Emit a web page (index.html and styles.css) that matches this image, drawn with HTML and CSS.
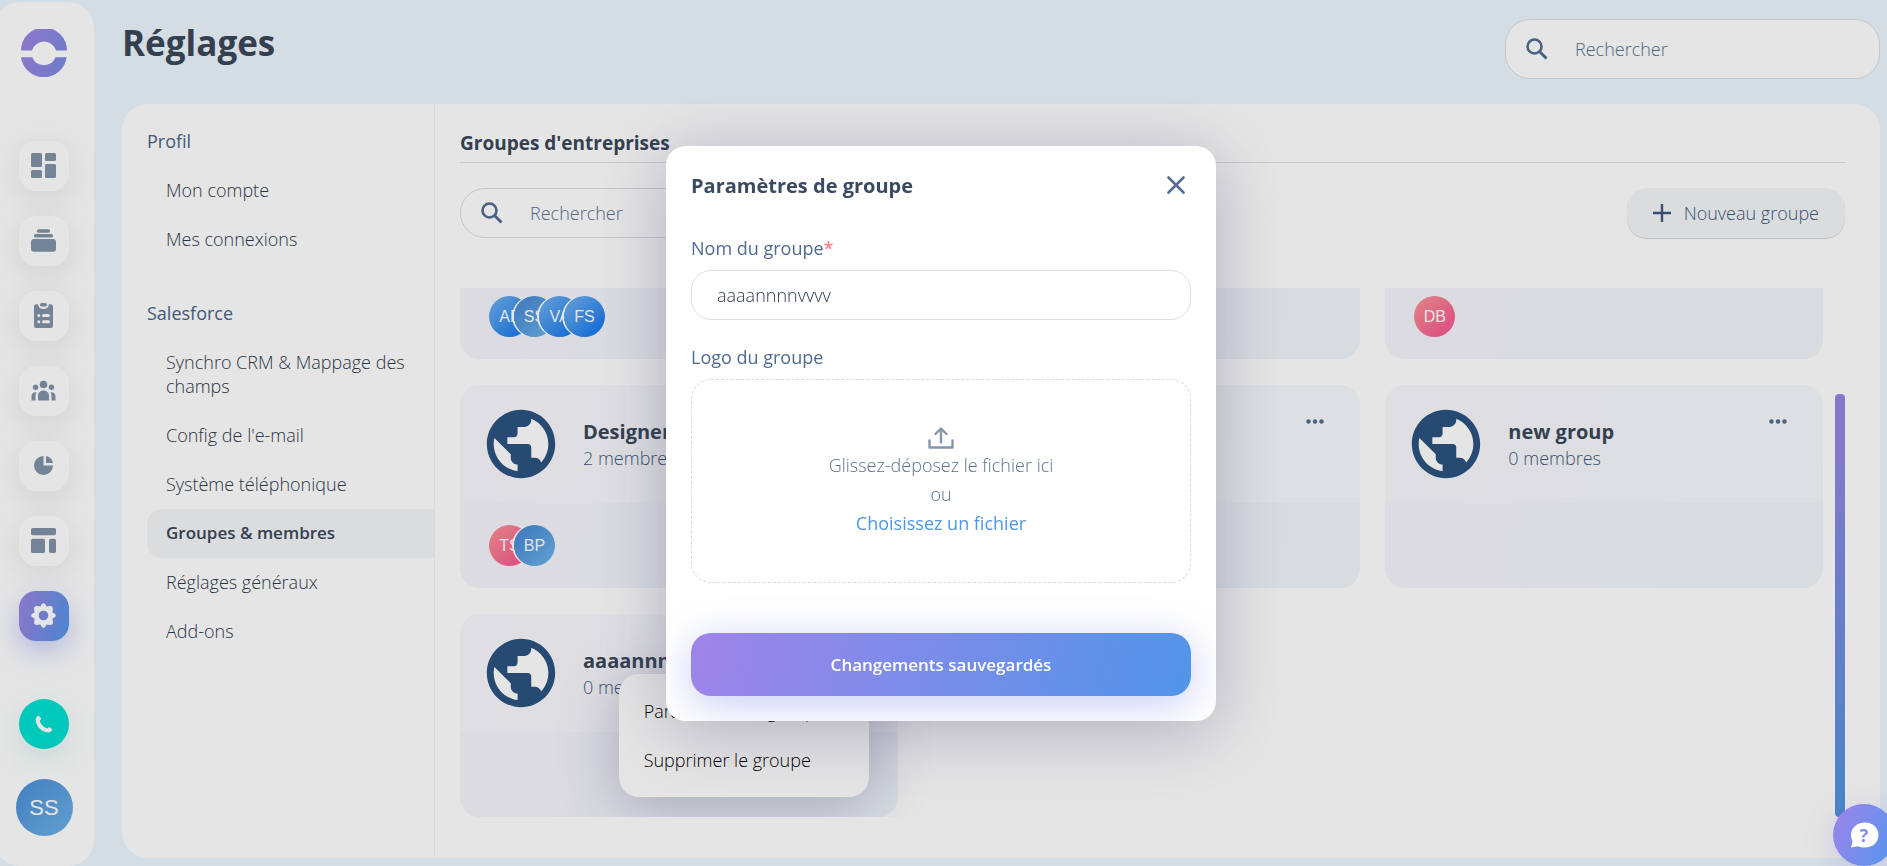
FILE: index.html
```html
<!DOCTYPE html>
<html lang="fr">
<head>
<meta charset="utf-8">
<title>Réglages</title>
<link rel="stylesheet" href="styles.css">
</head>
<body>
<svg class="defs" aria-hidden="true">
  <defs>
    <linearGradient id="brand" x1="0" y1="0" x2="1" y2="0.3">
      <stop offset="0" stop-color="#9f84e0"/>
      <stop offset="1" stop-color="#808ae0"/>
    </linearGradient>
    <symbol id="i-search" viewBox="0 0 22 22"><circle cx="8.500" cy="8.500" r="7" fill="none" stroke="currentColor" stroke-width="2.600"/><path d="M13.500 13.500 20.500 20.500" stroke="currentColor" stroke-width="3" fill="none"/></symbol>
    <symbol id="i-globe" viewBox="0 0 24 24"><circle cx="12" cy="12" r="9" fill="#fff"/><path fill="currentColor" d="M12 2C6.480 2 2 6.480 2 12s4.480 10 10 10 10-4.480 10-10S17.520 2 12 2zm-1 17.930c-3.950-.490-7-3.850-7-7.930 0-.620.080-1.210.210-1.790L9 15v1c0 1.100.900 2 2 2v1.930zm6.900-2.540c-.260-.810-1-1.390-1.900-1.390h-1v-3c0-.550-.450-1-1-1H8v-2h2c.550 0 1-.450 1-1V7h2c1.100 0 2-.900 2-2v-.410c2.930 1.190 5 4.060 5 7.410 0 2.080-.800 3.970-2.100 5.390z"/></symbol>
    <symbol id="i-dots" viewBox="0 0 18 5"><circle cx="2.500" cy="2.500" r="2.200"/><circle cx="9" cy="2.500" r="2.200"/><circle cx="15.500" cy="2.500" r="2.200"/></symbol>
  </defs>
</svg>

<div class="app">
  <nav class="sidebar" aria-label="Navigation principale">
    <svg class="logo" viewBox="0 0 46 48"><path fill="url(#brand)" d="M0 21.500A23 23 0 0 1 46 21.500H35A12.500 12.500 0 0 0 11 21.500ZM0 28.300A23 23 0 0 0 45.600 28.300H34.500A12.500 12.500 0 0 1 11.300 28.300Z"/></svg>
    <div class="rail">
      <a class="rail-item" href="#" aria-label="Tableau de bord"><svg viewBox="0 0 25 25" fill="currentColor"><rect width="11" height="14" rx="1.500"/><rect x="14" width="11" height="8" rx="1.500"/><rect y="17" width="11" height="8" rx="1.500"/><rect x="14" y="11" width="11" height="14" rx="1.500"/></svg></a>
      <a class="rail-item" href="#" aria-label="Collections"><svg viewBox="0 0 25 25" fill="currentColor"><rect x="6" y="1.200" width="13" height="3.600" rx="1.500"/><rect x="3" y="6" width="19" height="3.600" rx="1.500"/><rect y="11" width="25" height="12.800" rx="3"/></svg></a>
      <a class="rail-item" href="#" aria-label="Tâches"><svg viewBox="0 0 25 25"><path fill="currentColor" d="M5.500 1.300H7C7.500 4.500 9 6 12.500 6S17.500 4.500 18 1.300H19.500A2.500 2.500 0 0 1 22 3.800V22.500A2.500 2.500 0 0 1 19.500 25H5.500A2.500 2.500 0 0 1 3 22.500V3.800A2.500 2.500 0 0 1 5.500 1.300Z"/><rect x="9" y="0" width="7" height="3.600" rx="1.700" fill="currentColor"/><g fill="#fff"><circle cx="7.800" cy="12.500" r="1.500"/><circle cx="7.800" cy="18.800" r="1.500"/><rect x="11" y="11" width="8" height="3" rx="1.500"/><rect x="11" y="17.300" width="8" height="3" rx="1.500"/></g></svg></a>
      <a class="rail-item" href="#" aria-label="Contacts"><svg viewBox="0 0 25 25" fill="currentColor"><circle cx="12.500" cy="6.500" r="3.800"/><circle cx="4.600" cy="9.300" r="2.700"/><circle cx="20.400" cy="9.300" r="2.700"/><path d="M7 22.500V17.500A5.500 5 0 0 1 18 17.500V22.500Z"/><path d="M.5 22.500V18.500C.5 15.500 2.500 14 5.500 14.300C4.700 16 4.500 17.500 4.500 19.500V22.500ZM24.500 22.500V18.500C24.500 15.500 22.500 14 19.500 14.300C20.300 16 20.500 17.500 20.500 19.500V22.500Z"/></svg></a>
      <a class="rail-item" href="#" aria-label="Rapports"><svg viewBox="0 0 25 25" fill="currentColor"><path d="M12.500 3A9.500 9.500 0 1 0 22 12.500H12.500Z"/><path d="M15 3A9 8.500 0 0 1 22 10H15Z"/></svg></a>
      <a class="rail-item" href="#" aria-label="Modèles"><svg viewBox="0 0 25 25" fill="currentColor"><rect width="25" height="7.200" rx="1.800"/><rect y="10.800" width="14" height="14.200" rx="1.800"/><rect x="18" y="10.800" width="7" height="14.200" rx="1.800"/></svg></a>
      <a class="rail-item is-active" href="#" aria-label="Réglages"><svg viewBox="0 0 25 25"><path fill="#fff" fill-rule="evenodd" d="M10.500 1.500Q12.500-1.200 14.500 1.500L15.600 3.600L18.900 3Q22 2.800 21.900 6.100L21.400 9.400L23.500 10.500Q26.200 12.500 23.500 14.500L21.400 15.600L22 18.900Q22.200 22 18.900 21.900L15.600 21.400L14.500 23.500Q12.500 26.200 10.500 23.500L9.400 21.400L6.100 22Q3 22.200 3.100 18.900L3.600 15.600L1.500 14.500Q-1.200 12.500 1.500 10.500L3.600 9.400L3 6.100Q2.800 3 6.100 3.100L9.400 3.600ZM12.500 7.700A4.800 4.800 0 1 0 12.500 17.300A4.800 4.800 0 1 0 12.500 7.700Z"/></svg></a>
    </div>
    <a class="call" href="#" aria-label="Appeler"><svg viewBox="0 0 18 18"><path fill="#fff" d="M3.500.6C1.600 1.300.6 3 .7 5C1.100 11.500 6.500 17 13 17.300C15 17.400 16.800 16.500 17.500 14.500L14.300 12L12.200 13.500C8.500 12.200 6 9.700 4.700 6L6.300 3.800Z"/></svg></a>
    <a class="me" href="#">SS</a>
  </nav>

  <main class="main">
    <header class="topbar">
      <h1>Réglages</h1>
      <label class="search search-top"><svg><use href="#i-search"/></svg><input type="search" placeholder="Rechercher" aria-label="Rechercher"></label>
    </header>

    <div class="panel">
      <nav class="menu" aria-label="Réglages">
        <section>
          <h2>Profil</h2>
          <a href="#">Mon compte</a>
          <a href="#">Mes connexions</a>
        </section>
        <section>
          <h2>Salesforce</h2>
          <a href="#">Synchro CRM &amp; Mappage des champs</a>
          <a href="#">Config de l'e-mail</a>
          <a href="#">Système téléphonique</a>
          <a href="#" class="is-current">Groupes &amp; membres</a>
          <a href="#">Réglages généraux</a>
          <a href="#">Add-ons</a>
        </section>
      </nav>

      <section class="content">
        <h2 class="content-title">Groupes d'entreprises</h2>
        <div class="tools">
          <label class="search search-groups"><svg><use href="#i-search"/></svg><input type="search" placeholder="Rechercher" aria-label="Rechercher un groupe"></label>
          <button class="new-group" type="button"><svg viewBox="0 0 18 18"><path d="M9 0V18M0 9H18" stroke="currentColor" stroke-width="2.400"/></svg>Nouveau groupe</button>
        </div>
        <div class="groups">
          <div class="grid">
            <article class="card">
              <div class="card-head"></div>
              <div class="card-foot"><span class="avatar sky">AF</span><span class="avatar blue">SS</span><span class="avatar sky">VA</span><span class="avatar sky">FS</span></div>
            </article>
            <article class="card">
              <div class="card-head"></div>
              <div class="card-foot"></div>
            </article>
            <article class="card">
              <div class="card-head"></div>
              <div class="card-foot"><span class="avatar pink">DB</span></div>
            </article>
            <article class="card">
              <div class="card-head"><svg class="globe"><use href="#i-globe"/></svg><div class="info"><h3>Designers</h3><p>2 membres</p></div></div>
              <div class="card-foot"><span class="avatar pink">TS</span><span class="avatar blue">BP</span></div>
            </article>
            <article class="card">
              <div class="card-head"><button class="more" type="button" aria-label="Options"><svg><use href="#i-dots"/></svg></button></div>
              <div class="card-foot"></div>
            </article>
            <article class="card">
              <div class="card-head"><svg class="globe"><use href="#i-globe"/></svg><div class="info"><h3>new group</h3><p>0 membres</p></div><button class="more" type="button" aria-label="Options"><svg><use href="#i-dots"/></svg></button></div>
              <div class="card-foot"></div>
            </article>
            <article class="card">
              <div class="card-head"><svg class="globe"><use href="#i-globe"/></svg><div class="info"><h3>aaaannnnvvvv</h3><p>0 membres</p></div></div>
              <div class="card-foot"></div>
              <div class="dropdown"><a href="#">Paramètres de groupe</a><a href="#">Supprimer le groupe</a></div>
            </article>
          </div>
          <div class="scroll-thumb"></div>
        </div>
      </section>
    </div>
  </main>
</div>

<div class="overlay">
  <form class="modal" role="dialog" aria-labelledby="modal-title">
    <header class="modal-head">
      <h2 id="modal-title">Paramètres de groupe</h2>
      <button class="close" type="button" aria-label="Fermer"><svg viewBox="0 0 18 18"><path d="M1.500 1.500 16.500 16.500M16.500 1.500 1.500 16.500" stroke="currentColor" stroke-width="2.600" stroke-linecap="round"/></svg></button>
    </header>
    <div class="field">
      <label for="group-name">Nom du groupe<span class="required">*</span></label>
      <input id="group-name" type="text" value="aaaannnnvvvv">
    </div>
    <div class="field">
      <span class="field-label">Logo du groupe</span>
      <div class="dropzone">
        <svg viewBox="0 0 26 22" fill="none" stroke="currentColor" stroke-width="2.400" stroke-linejoin="round" stroke-linecap="round"><path d="M1.500 13.500V20.500H24.500V13.500"/><path d="M13 15.500V2M7.500 7 13 1.500 18.500 7"/></svg>
        <span>Glissez-déposez le fichier ici</span>
        <span>ou</span>
        <a href="#">Choisissez un fichier</a>
      </div>
    </div>
    <button class="save" type="submit">Changements sauvegardés</button>
  </form>
</div>

<button class="help" type="button" aria-label="Aide"><svg viewBox="0 0 29 26"><path fill="#fff" d="M15 0.500C7 .5 1 6 1 13C1 15.500 1.600 17.500 2.500 19.200L1 25.500L8 24.300C10 25.200 12.500 25.500 15 25.500C23 25.500 28.500 20 28.500 13S23 .5 15 .5Z"/></svg><span>?</span></button>
</body>
</html>
```
FILE: styles.css
```css
* { box-sizing: border-box; }

body {
  margin: 0;
  height: 100vh;
  overflow: hidden;
  background: #eef6fe;
  color: #2f3b4d;
  font-family: "Open Sans", "Noto Sans", sans-serif;
  font-size: 18px;
  font-weight: 300;
  line-height: 25px;
}

h1, h2, h3, p { margin: 0; }
a { color: inherit; text-decoration: none; }
button, input { font: inherit; color: inherit; }
button { border: 0; padding: 0; background: none; cursor: pointer; }
.defs { position: absolute; width: 0; height: 0; }

.app { display: flex; height: 100vh; }

/* Sidebar */
.sidebar {
  flex: none;
  width: 100px;
  margin: 2px 28px 0 -6px;
  padding: 27px 0 30px;
  display: flex;
  flex-direction: column;
  align-items: center;
  background: #fff;
  border-radius: 26px;
}
.logo { width: 46px; height: 48px; margin-bottom: 64px; }
.rail { display: grid; gap: 25px; }
.rail-item {
  width: 50px;
  height: 50px;
  display: grid;
  place-items: center;
  padding: 0 1px 1px 0;
  border-radius: 17px;
  background: #fff;
  color: #8093a8;
  box-shadow: 0 8px 30px rgba(40, 40, 60, 0.1);
}
.rail-item svg { width: 25px; height: 25px; }
.rail-item.is-active {
  background: linear-gradient(105deg, #9f84e0, #5295e8);
  box-shadow: 0 10px 28px rgba(90, 110, 225, 0.35);
}
.call {
  width: 50px;
  height: 50px;
  margin-top: auto;
  display: grid;
  place-items: center;
  border-radius: 50%;
  background: #00dfd0;
  box-shadow: 0 10px 30px rgba(0, 180, 150, 0.14);
}
.call svg { width: 18px; height: 18px; }
.me {
  width: 57px;
  height: 57px;
  margin-top: 30px;
  border-radius: 50%;
  background: linear-gradient(135deg, #4a8bd8, #6fb4e6);
  color: #fff;
  font: 22px/57px "Liberation Sans", Arial, sans-serif;
  text-align: center;
}

/* Page header */
.main {
  flex: 1;
  min-width: 0;
  display: flex;
  flex-direction: column;
  padding: 19px 7px 8px 0;
}
.topbar {
  display: flex;
  justify-content: space-between;
  margin-bottom: 25px;
}
h1 { font-size: 35px; line-height: 48px; font-weight: 700; color: #3a4759; }

.search {
  display: flex;
  align-items: center;
  background: #fff;
  border: 1px solid #d9dee3;
  color: #526d91;
}
.search svg { flex: none; width: 22px; height: 22px; }
.search input {
  flex: 1;
  min-width: 0;
  border: 0;
  outline: 0;
  padding: 0;
  background: none;
}
.search input::placeholder { color: #5c728c; opacity: 1; }
.search-top { width: 375px; height: 60px; padding: 0 20px; gap: 27px; border-radius: 25px; }
.search-groups { width: 400px; height: 50px; padding: 0 20px; gap: 27px; border-radius: 25px; }

/* Panel */
.panel {
  flex: 1;
  min-height: 0;
  display: flex;
  background: #fff;
  border-radius: 26px;
}
.menu {
  flex: none;
  width: 313px;
  padding: 13px 0 0 25px;
  display: flex;
  flex-direction: column;
  gap: 25px;
  border-right: 1px solid #f0f2f5;
}
.menu h2 {
  padding: 12px 0;
  font-size: 18px;
  font-weight: 500;
  color: #4a658a;
}
.menu a {
  display: block;
  padding: 12px 19px 13px;
  border-radius: 15px 0 0 15px;
  line-height: 24px;
}
.menu .is-current { background: #f4f5f6; font-size: 17px; font-weight: 600; color: #3a4759; }

.content {
  flex: 1;
  min-width: 0;
  display: flex;
  flex-direction: column;
  padding: 27px 35px 41px 25px;
}
.content-title {
  padding-bottom: 6px;
  border-bottom: 1px solid #d9e1e6;
  font-size: 19px;
  font-weight: 700;
  color: #3a4759;
}
.tools { display: flex; justify-content: space-between; padding: 25px 0 50px; }
.new-group {
  display: flex;
  align-items: center;
  gap: 13px;
  height: 50px;
  padding: 0 26px;
  border-radius: 20px;
  background: #f4f5f6;
  box-shadow: 0 1px 1px #d5d8dc;
  color: #3f597e;
}
.new-group svg { width: 18px; height: 18px; }

.groups {
  flex: 1;
  min-height: 0;
  display: flex;
  align-items: flex-end;
  gap: 12px;
  overflow: hidden;
}
.grid {
  flex: 1;
  display: grid;
  grid-template-columns: repeat(3, 1fr);
  gap: 26px 25px;
}
.scroll-thumb {
  width: 10px;
  height: 80%;
  border-radius: 4px;
  background: linear-gradient(#9b84e2, #5295e0);
}

.card {
  position: relative;
  border-radius: 20px;
  background: linear-gradient(105deg, #f6f4fb, #eff5fa);
}
.card-head {
  display: flex;
  align-items: center;
  height: 118px;
  padding: 0 36px 0 20px;
  border-radius: 20px 20px 0 0;
  background: rgba(255, 255, 255, 0.4);
}
.globe { width: 82px; height: 82px; margin-right: 21px; color: #2b537f; }
.info { flex: 1; }
.info h3 { font-size: 20px; line-height: 28px; font-weight: 700; color: #3a4759; }
.info p { color: #3f597e; }
.more { align-self: flex-start; height: 18px; margin: 27px 0 0 auto; color: #526d91; }
.more svg { display: block; width: 18px; height: 5px; fill: currentColor; }
.card-foot { display: flex; height: 85px; padding: 22px 29px; }
.avatar {
  width: 41px;
  height: 41px;
  border-radius: 50%;
  color: #fff;
  font: 16px/41px "Liberation Sans", Arial, sans-serif;
  text-align: center;
}
.avatar + .avatar { margin-left: -16px; box-shadow: -2px 0 0 #fff; }
.sky { background: linear-gradient(135deg, #76b3f0, #0b72ea); }
.blue { background: linear-gradient(135deg, #4584d4, #6db4e8); }
.pink { background: linear-gradient(135deg, #fb9494, #f5528f); }

.dropdown {
  position: absolute;
  top: 60px;
  right: 29px;
  width: 250px;
  padding: 13px 0 12px;
  border-radius: 20px;
  background: #fff;
  box-shadow: 0 10px 60px rgba(70, 65, 120, 0.32);
  color: #000;
}
.dropdown a { display: block; padding: 12px 25px; }

/* Dialog */
.overlay {
  position: fixed;
  inset: 0;
  display: flex;
  align-items: center;
  justify-content: center;
  padding-right: 5px;
  background: rgba(0, 0, 0, 0.1);
}
.modal {
  width: 550px;
  padding: 25px;
  border-radius: 20px;
  background: #fff;
  box-shadow: 0 10px 70px rgba(60, 55, 100, 0.32);
  overflow: hidden;
}
.modal-head {
  display: flex;
  align-items: center;
  justify-content: space-between;
  height: 29px;
  margin-bottom: 36px;
}
.modal-head h2 { font-size: 20px; font-weight: 700; color: #3a4a62; }
.close { display: flex; padding: 6px; color: #526d91; }
.close svg { width: 18px; height: 18px; }
.field { display: flex; flex-direction: column; gap: 9px; margin-bottom: 25px; }
.field label, .field-label { font-weight: 500; color: #4f6b90; }
.required { color: #ff6b6b; }
.field input {
  height: 50px;
  padding: 0 25px;
  border: 1px solid #dcdfe3;
  border-radius: 20px;
  outline: 0;
}
.dropzone {
  height: 204px;
  padding-top: 2px;
  display: flex;
  flex-direction: column;
  align-items: center;
  justify-content: center;
  gap: 4px;
  border: 1px dashed #d5d8dc;
  border-radius: 20px;
  color: #5c728c;
}
.dropzone svg { width: 26px; height: 22px; color: #8496ab; }
.dropzone a { color: #4c96ec; font-weight: 500; }
.save {
  display: block;
  width: 100%;
  height: 63px;
  margin-top: 50px;
  border-radius: 20px;
  background: linear-gradient(105deg, #9f84e9, #5295e8);
  box-shadow: 0 8px 40px rgba(90, 110, 225, 0.35);
  color: #fff;
  font-size: 17px;
  font-weight: 600;
}

.help {
  position: fixed;
  right: -8px;
  bottom: 0;
  width: 62px;
  height: 62px;
  display: grid;
  place-items: center;
  border-radius: 50%;
  background: linear-gradient(115deg, #9f84e9, #5295ee);
  box-shadow: 0 6px 30px rgba(120, 100, 225, 0.22);
}
.help > * { grid-area: 1 / 1; }
.help svg { width: 29px; height: 26px; }
.help span { font-size: 18px; font-weight: 700; color: #8090e8; }
```
